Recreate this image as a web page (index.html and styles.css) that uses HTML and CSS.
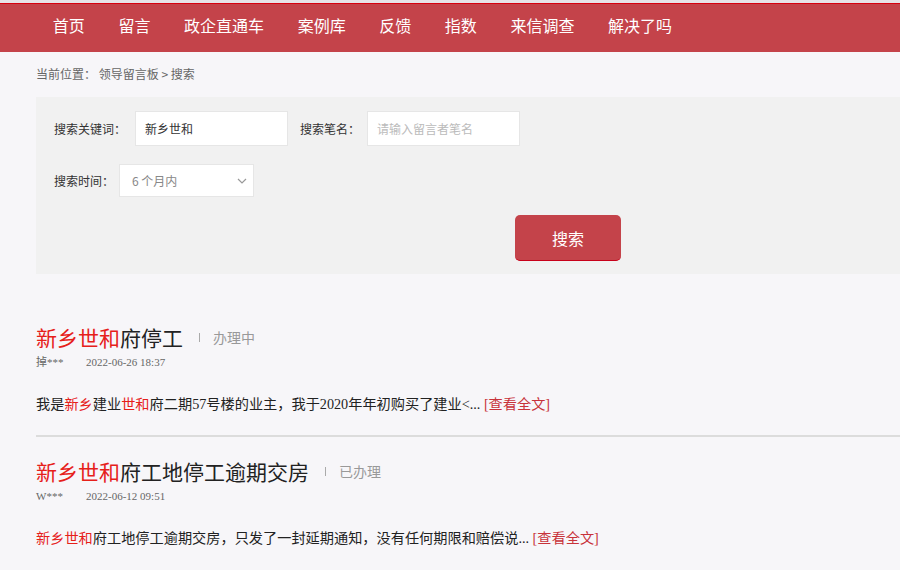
FILE: index.html
```html
<!DOCTYPE html>
<html lang="zh-CN">
<head>
  <meta charset="UTF-8">
  <meta name="viewport" content="width=device-width, initial-scale=1.0">
  <title>领导留言板 - 搜索</title>
  <link rel="stylesheet" href="styles.css">
</head>
<body>
  <div class="topline"></div>
  <div class="nav">
    <a href="#">首页</a>
    <a href="#">留言</a>
    <a href="#">政企直通车</a>
    <a href="#">案例库</a>
    <a href="#">反馈</a>
    <a href="#">指数</a>
    <a href="#">来信调查</a>
    <a href="#">解决了吗</a>
  </div>

  <div class="main">
    <div class="crumb">当前位置： 领导留言板 &gt; 搜索</div>

    <div class="search-box">
      <div class="row">
        <label>搜索关键词：</label>
        <input class="field" type="text" value="新乡世和">
        <label class="second">搜索笔名：</label>
        <input class="field" type="text" placeholder="请输入留言者笔名">
      </div>
      <div class="row">
        <label class="short">搜索时间：</label>
        <div class="select">
          <span>6 个月内</span>
          <svg width="10" height="6" viewBox="0 0 10 6"><path d="M1 1l4 4 4-4" fill="none" stroke="#999" stroke-width="1.2"/></svg>
        </div>
      </div>
      <div class="row">
        <button class="btn">搜索</button>
      </div>
    </div>

    <div class="list">
      <div class="item">
        <div class="title"><em>新乡世和</em>府停工<i class="sep"></i><span class="state">办理中</span></div>
        <div class="meta"><span class="author">掉***</span><span>2022-06-26 18:37</span></div>
        <div class="text">我是<em>新乡</em>建业<em>世和</em>府二期57号楼的业主，我于2020年年初购买了建业&lt;... <a href="#">[查看全文]</a></div>
      </div>
      <div class="item">
        <div class="title"><em>新乡世和</em>府工地停工逾期交房<i class="sep"></i><span class="state">已办理</span></div>
        <div class="meta"><span class="author">W***</span><span>2022-06-12 09:51</span></div>
        <div class="text"><em>新乡世和</em>府工地停工逾期交房，只发了一封延期通知，没有任何期限和赔偿说... <a href="#">[查看全文]</a></div>
      </div>
    </div>
  </div>
</body>
</html>
```

FILE: styles.css
```css
* {
  box-sizing: border-box;
  margin: 0;
  padding: 0;
}

body {
  background: #f7f6f9;
  font-family: "Noto Sans CJK SC", sans-serif;
  color: #333;
}

.topline {
  height: 3px;
  background: #e6e4e8;
}

.nav {
  height: 49px;
  background: #c4434a;
  border-top: 1px solid #d7000f;
  display: flex;
  align-items: center;
  padding: 0 0 6px 36px;
}

.nav a {
  color: #fff;
  font-size: 16px;
  text-decoration: none;
  padding: 0 16.8px;
}

.main {
  padding-left: 36px;
}

.crumb {
  font-size: 12px;
  line-height: 20px;
  color: #666;
  margin-top: 12px;
}

.search-box {
  background: #f1f1f1;
  margin-top: 13px;
  padding: 14px 0 13px 18px;
}

.row {
  display: flex;
  align-items: center;
  margin-bottom: 18px;
}

.row:last-child {
  margin-bottom: 0;
}

.row label {
  font-size: 12px;
  color: #333;
  margin-right: 9px;
}

.row label.second {
  margin-left: 12px;
  margin-right: 7px;
}

.row label.short {
  margin-right: 5px;
}

.field {
  width: 153px;
  height: 35px;
  border: 1px solid #e6e6e6;
  background: #fff;
  padding: 0 9px;
  font-family: "Noto Sans CJK SC", sans-serif;
  font-size: 12px;
  color: #333;
  outline: none;
}

.field::placeholder {
  color: #bbb;
}

.select {
  width: 135px;
  height: 33px;
  background: #fff;
  border: 1px solid #e6e6e6;
  display: flex;
  align-items: center;
  justify-content: space-between;
  padding: 0 6px 0 12px;
  font-size: 12px;
  color: #888;
}

.btn {
  margin-left: 461px;
  width: 106px;
  height: 46px;
  background: #c4434a;
  border: none;
  border-bottom: 1px solid #c8001a;
  border-radius: 5px;
  color: #fff;
  font-family: "Noto Sans CJK SC", sans-serif;
  font-size: 16px;
  cursor: pointer;
}

.list {
  margin-top: 29px;
}

.item {
  padding: 19px 0 20px;
  border-bottom: 2px solid #dcdcdc;
}

.item:last-child {
  border-bottom: none;
}

em {
  font-style: normal;
  color: #e6201a;
}

.title {
  font-size: 21px;
  line-height: 30px;
  color: #222;
  display: flex;
  align-items: center;
}

.sep {
  display: inline-block;
  width: 1px;
  height: 9px;
  background: #aaa;
  margin: 0 13px 0 16px;
}

.state {
  font-size: 14px;
  color: #999;
}

.meta {
  margin-top: 2px;
  font-family: "Liberation Serif", "Noto Sans CJK SC", serif;
  font-size: 11px;
  line-height: 16px;
  color: #666;
}

.author {
  display: inline-block;
  width: 50px;
}

.text {
  margin-top: 23px;
  font-family: "Liberation Serif", "Noto Sans CJK SC", serif;
  font-size: 14.2px;
  line-height: 22px;
  color: #222;
}

.text a {
  color: #c8323a;
  text-decoration: none;
}
```
